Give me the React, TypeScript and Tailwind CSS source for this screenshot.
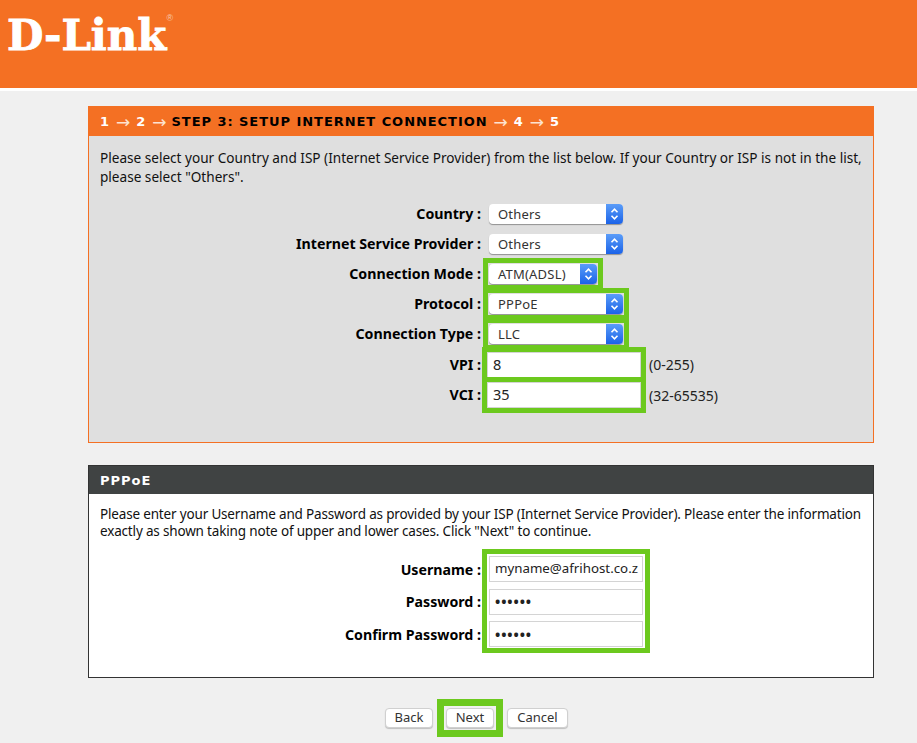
import React from 'react';

const bodyFont = "font-['Noto_Sans','Liberation_Sans',sans-serif]";

const SelectBox = ({ value, width, highlighted }: { value: string; width: string; highlighted?: boolean }) => (
  <div className={`${highlighted ? 'outline-[5px] outline-offset-[1px] outline-[#6cc91e]' : ''}`}>
    <div
      className={`flex h-[20px] ${width} items-stretch overflow-hidden rounded-[4px] bg-white shadow-[0_1px_1px_rgba(0,0,0,0.35)]`}
    >
      <span className="flex-1 pl-[9px] text-[13px] leading-[20px] tracking-[0.2px] text-[#333]">{value}</span>
      <span className="flex w-[17px] items-center justify-center bg-gradient-to-b from-[#5a9cf8] to-[#1a62e8]">
        <svg width="9" height="14" viewBox="0 0 9 14" fill="none" stroke="white" strokeWidth="1.6">
          <path d="M1.5 5.2 4.5 2.2 7.5 5.2" />
          <path d="M1.5 8.8 4.5 11.8 7.5 8.8" />
        </svg>
      </span>
    </div>
  </div>
);

const Row = ({ label, height, children }: { label: string; height: string; children: React.ReactNode }) => (
  <div className={`flex ${height} items-center`}>
    <div className="w-[400px] pr-[8px] text-right text-[14.2px] font-bold whitespace-nowrap text-black">{label} :</div>
    {children}
  </div>
);

const TextBox = ({ value, width, textClass }: { value: string; width: string; textClass: string }) => (
  <div
    className={`flex h-[26px] ${width} items-center overflow-hidden border border-[#d4d4d4] bg-white pl-[5px] whitespace-nowrap text-[#222] ${textClass}`}
  >
    {value}
  </div>
);

const Button = ({ label, width }: { label: string; width: string }) => (
  <div
    className={`flex h-[20px] ${width} items-center justify-center rounded-[4px] border border-[#d0d0d0] bg-white text-[13px] text-[#333] shadow-[0_1px_1px_rgba(0,0,0,0.2)]`}
  >
    {label}
  </div>
);

const Arrow = () => <span className="text-[17px] leading-none font-normal tracking-normal text-[#fde3d0]">→</span>;

export default function App() {
  return (
    <div className={`h-[743px] w-[917px] overflow-hidden bg-[#f0f0f0] ${bodyFont}`}>
      <header className="h-[91px] border-b-[3px] border-white bg-[#f47023] pt-[11px] pl-[7px]">
        <div className="relative inline-block font-['DejaVu_Serif',serif] text-[42px] leading-[50px] font-bold tracking-[-0.1px] text-white [-webkit-text-stroke:0.8px_white]">
          D-Link
          <span className="absolute top-[-3px] right-[-7px] font-['Liberation_Sans',sans-serif] text-[9px] leading-[20px] font-normal tracking-normal text-[#f8c9a8] [-webkit-text-stroke:0]">
            ®
          </span>
        </div>
      </header>

      <main className="mx-[88px] mt-[15px] w-[786px]">
        <section className="h-[337px] border border-[#f47023] bg-[#dfdfdf]">
          <h2 className="flex h-[29px] items-center gap-[6px] bg-[#f47023] pt-[1px] pl-[11px] font-['DejaVu_Sans',sans-serif] text-[13px] font-bold tracking-[0.95px] whitespace-nowrap text-white">
            <span>1</span>
            <Arrow />
            <span>2</span>
            <Arrow />
            <span className="-ml-[1px] text-black">STEP 3: SETUP INTERNET CONNECTION</span>
            <Arrow />
            <span>4</span>
            <Arrow />
            <span>5</span>
          </h2>
          <p className="px-[11px] pt-[12px] text-[13.6px] leading-[19px] text-[#111]">
            Please select your Country and ISP (Internet Service Provider) from the list below. If your Country or ISP is
            not in the list, please select "Others".
          </p>
          <div className="mt-[13px]">
            <Row label="Country" height="h-[30px]">
              <SelectBox value="Others" width="w-[134px]" />
            </Row>
            <Row label="Internet Service Provider" height="h-[30px]">
              <SelectBox value="Others" width="w-[134px]" />
            </Row>
            <Row label="Connection Mode" height="h-[30px]">
              <SelectBox value="ATM(ADSL)" width="w-[108px]" highlighted />
            </Row>
            <Row label="Protocol" height="h-[30px]">
              <SelectBox value="PPPoE" width="w-[134px]" highlighted />
            </Row>
            <Row label="Connection Type" height="h-[30px]">
              <SelectBox value="LLC" width="w-[134px]" highlighted />
            </Row>
            <Row label="VPI" height="h-[31px]">
              <div className="-ml-[2px] outline-[5px] outline-[#6cc91e]">
                <TextBox value="8" width="w-[154px]" textClass="text-[14.5px]" />
              </div>
              <span className="ml-[8px] text-[14px] text-[#222]">(0-255)</span>
            </Row>
            <Row label="VCI" height="h-[30px]">
              <div className="-ml-[2px] outline-[5px] outline-[#6cc91e]">
                <TextBox value="35" width="w-[154px]" textClass="text-[14.5px]" />
              </div>
              <span className="ml-[8px] text-[14px] text-[#222]">(32-65535)</span>
            </Row>
          </div>
        </section>

        <section className="mt-[22px] h-[213px] border border-[#333] bg-white">
          <h2 className="h-[28px] bg-[#404343] pl-[11px] font-['DejaVu_Sans',sans-serif] text-[13px] leading-[30px] font-bold tracking-[1px] text-white">
            PPPoE
          </h2>
          <p className="px-[11px] pt-[12px] text-[13.5px] leading-[17px] tracking-[-0.17px] whitespace-nowrap text-[#111]">
            Please enter your Username and Password as provided by your ISP (Internet Service Provider). Please enter the
            information
            <br />
            exactly as shown taking note of upper and lower cases. Click "Next" to continue.
          </p>
          <div className="mt-[14px] flex">
            <div className="-mt-[1px] w-[398px] pr-[6px] text-right text-[14.2px] font-bold text-black">
              <div className="flex h-[32.5px] items-center justify-end">Username :</div>
              <div className="flex h-[32.5px] items-center justify-end">Password :</div>
              <div className="flex h-[32.5px] items-center justify-end">Confirm Password :</div>
            </div>
            <div className="flex h-[94px] w-[158px] flex-col justify-between pt-[2px] pb-[1px] pl-[2px] outline-[5px] outline-[#6cc91e]">
              <TextBox value="myname@afrihost.co.z" width="w-[154px]" textClass="text-[13.3px]" />
              <TextBox value="••••••" width="w-[154px]" textClass="text-[14px] font-bold tracking-[0.9px]" />
              <TextBox value="••••••" width="w-[154px]" textClass="text-[14px] font-bold tracking-[0.9px]" />
            </div>
          </div>
        </section>

        <div className="mt-[30px] ml-[297px] flex gap-[13px]">
          <Button label="Back" width="w-[48px]" />
          <div className="outline-[7px] outline-offset-[2px] outline-[#6cc91e]">
            <Button label="Next" width="w-[48px]" />
          </div>
          <Button label="Cancel" width="w-[61px]" />
        </div>
      </main>
    </div>
  );
}
